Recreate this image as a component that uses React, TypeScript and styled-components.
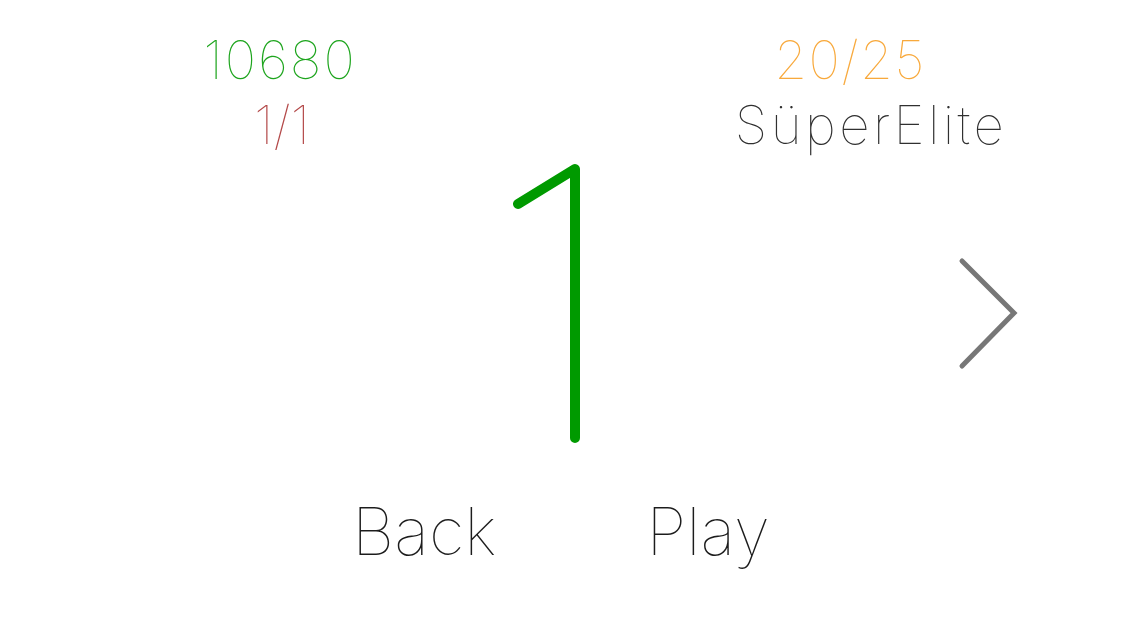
import React from "react";
import styled, { createGlobalStyle } from "styled-components";

const Global = createGlobalStyle`
  html, body { margin: 0; padding: 0; background: #ffffff; }
  body { font-family: Inter, Lato, sans-serif; }
`;

const Page = styled.div`
  width: 1136px;
  height: 640px;
  display: flex;
  flex-direction: column;
  overflow: hidden;
  background: #fff;
`;

const Top = styled.div`
  display: grid;
  grid-template-columns: 1fr 1fr;
  padding-top: 34px;
`;

const Stat = styled.div`
  display: flex;
  flex-direction: column;
  align-items: center;
  gap: 12px;
`;

const Label = styled.div<{ $color: string; $dx?: number; $ls?: number }>`
  font-family: Inter, Lato, sans-serif;
  font-weight: 100;
  font-size: 53px;
  line-height: 53px;
  color: ${(p) => p.$color};
  letter-spacing: ${(p) => p.$ls ?? 0}px;
  transform: translateX(${(p) => p.$dx ?? 0}px);
  white-space: nowrap;
`;

const Middle = styled.div`
  display: flex;
  align-items: flex-start;
  height: 346px;
  padding-top: 8px;
  box-sizing: border-box;
`;

const Digit = styled.svg`
  margin-left: 505px;
  width: 85px;
  height: 288px;
`;

const NextButton = styled.button`
  margin-left: 360px;
  margin-top: 90px;
  width: 75px;
  height: 130px;
  padding: 0;
  border: none;
  background: none;
  cursor: pointer;
  display: block;
`;

const Bottom = styled.div`
  display: flex;
  align-items: flex-start;
  padding-left: 352px;
  gap: 150px;
`;

const Action = styled.button`
  font-family: Inter, Lato, sans-serif;
  font-weight: 100;
  font-size: 66px;
  line-height: 66px;
  color: #1c1c1c;
  background: none;
  border: none;
  padding: 0;
  letter-spacing: 0px;
  cursor: pointer;
`;

export default function App() {
  return (
    <>
      <Global />
      <Page>
        <Top>
          <Stat>
            <Label $color="#1ea51e" $dx={-4} $ls={2}>10680</Label>
            <Label $color="#b34848" $dx={-2}>1/1</Label>
          </Stat>
          <Stat>
            <Label $color="#f8a93c" $dx={-2} $ls={1.5}>20/25</Label>
            <Label $color="#303030" $dx={19} $ls={3.4}>SüperElite</Label>
          </Stat>
        </Top>
        <Middle>
          <Digit viewBox="0 0 85 288">
            <polyline
              points="13,44 70,9 70,278"
              fill="none"
              stroke="#009a00"
              strokeWidth={10}
              strokeLinecap="round"
              strokeLinejoin="round"
            />
          </Digit>
          <NextButton aria-label="Next">
            <svg width="75" height="130" viewBox="0 0 75 130">
              <polyline
                points="12,11 64,63 12,116"
                fill="none"
                stroke="#777777"
                strokeWidth={5}
                strokeLinecap="round"
                strokeLinejoin="miter"
              />
            </svg>
          </NextButton>
        </Middle>
        <Bottom>
          <Action>Back</Action>
          <Action>Play</Action>
        </Bottom>
      </Page>
    </>
  );
}
